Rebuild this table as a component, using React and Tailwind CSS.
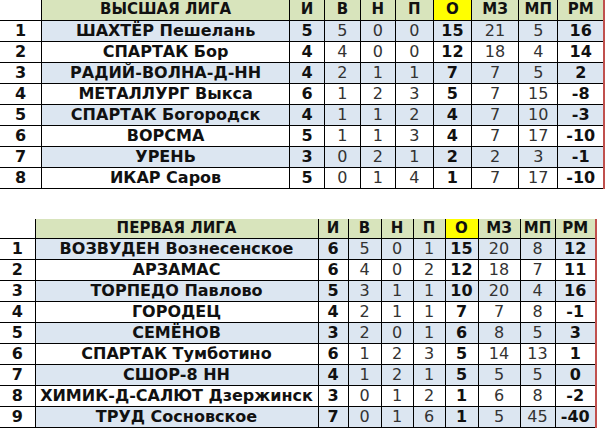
const top = [
  [1, "ШАХТЁР Пешелань", 5, 5, 0, 0, 15, 21, 5, 16],
  [2, "СПАРТАК Бор", 4, 4, 0, 0, 12, 18, 4, 14],
  [3, "РАДИЙ-ВОЛНА-Д-НН", 4, 2, 1, 1, 7, 7, 5, 2],
  [4, "МЕТАЛЛУРГ Выкса", 6, 1, 2, 3, 5, 7, 15, -8],
  [5, "СПАРТАК Богородск", 4, 1, 1, 2, 4, 7, 10, -3],
  [6, "ВОРСМА", 5, 1, 1, 3, 4, 7, 17, -10],
  [7, "УРЕНЬ", 3, 0, 2, 1, 2, 2, 3, -1],
  [8, "ИКАР Саров", 5, 0, 1, 4, 1, 7, 17, -10],
];

const first = [
  [1, "ВОЗВУДЕН Вознесенское", 6, 5, 0, 1, 15, 20, 8, 12],
  [2, "АРЗАМАС", 6, 4, 0, 2, 12, 18, 7, 11],
  [3, "ТОРПЕДО Павлово", 5, 3, 1, 1, 10, 20, 4, 16],
  [4, "ГОРОДЕЦ", 4, 2, 1, 1, 7, 7, 8, -1],
  [5, "СЕМЁНОВ", 3, 2, 0, 1, 6, 8, 5, 3],
  [6, "СПАРТАК Тумботино", 6, 1, 2, 3, 5, 14, 13, 1],
  [7, "СШОР-8 НН", 4, 1, 2, 1, 5, 5, 5, 0],
  [8, "ХИМИК-Д-САЛЮТ Дзержинск", 3, 0, 1, 2, 1, 6, 8, -2],
  [9, "ТРУД Сосновское", 7, 0, 1, 6, 1, 5, 45, -40],
];

const cols = ["И", "В", "Н", "П", "О", "МЗ", "МП", "РМ"];
// bold columns: И, О, РМ
const bold = [true, false, false, false, true, false, false, true];

const League = ({ title, rows, widths }) => (
  <table className="table-fixed border-collapse text-[#111] font-['DejaVu_Sans',sans-serif]">
    <colgroup>
      {widths.map((w, i) => (
        <col key={i} style={{ width: w }} />
      ))}
    </colgroup>
    <thead>
      <tr className="h-[20px]">
        <th className="border-b border-black bg-white" />
        <th className="border border-t-0 border-black bg-[#d8e4bc] text-[15px] font-bold leading-none">
          {title}
        </th>
        {cols.map((c, i) => (
          <th
            key={c}
            className={
              "border border-t-0 border-black text-[15px] font-bold leading-none " +
              (c === "О" ? "bg-[#ffff00] " : "bg-[#d8e4bc] ") +
              (i === 7 ? "border-r-2 border-r-[#c0504d]" : "")
            }
          >
            {c}
          </th>
        ))}
      </tr>
    </thead>
    <tbody>
      {rows.map((r, ri) => {
        const bg = ri % 2 === 0 ? "bg-[#dce6f1]" : "bg-white";
        return (
          <tr key={r[0]} className="h-[21px]">
            <td className="border border-l-0 border-black bg-white text-center text-[16px] font-bold leading-none">
              {r[0]}
            </td>
            <td
              className={
                "border border-black text-center text-[16px] font-bold leading-none whitespace-nowrap " +
                bg
              }
            >
              {r[1]}
            </td>
            {r.slice(2).map((v, i) => (
              <td
                key={i}
                className={
                  "border border-black text-center text-[16px] leading-none " +
                  bg +
                  (bold[i] ? " font-bold" : " font-normal text-[#333]") +
                  (i === 7 ? " border-r-2 border-r-[#c0504d]" : "")
                }
              >
                {v}
              </td>
            ))}
          </tr>
        );
      })}
    </tbody>
  </table>
);

export default function App() {
  return (
    <div className="min-h-screen w-[605px] bg-white flex flex-col">
      <League title="ВЫСШАЯ ЛИГА" rows={top} widths={[37, 221, 31, 32, 31, 34, 34, 42, 35, 41]} />
      <div className="mt-[30px]">
        <League title="ПЕРВАЯ ЛИГА" rows={first} widths={[35, 283, 30, 33, 32, 32, 33, 42, 35, 41]} />
      </div>
    </div>
  );
}
